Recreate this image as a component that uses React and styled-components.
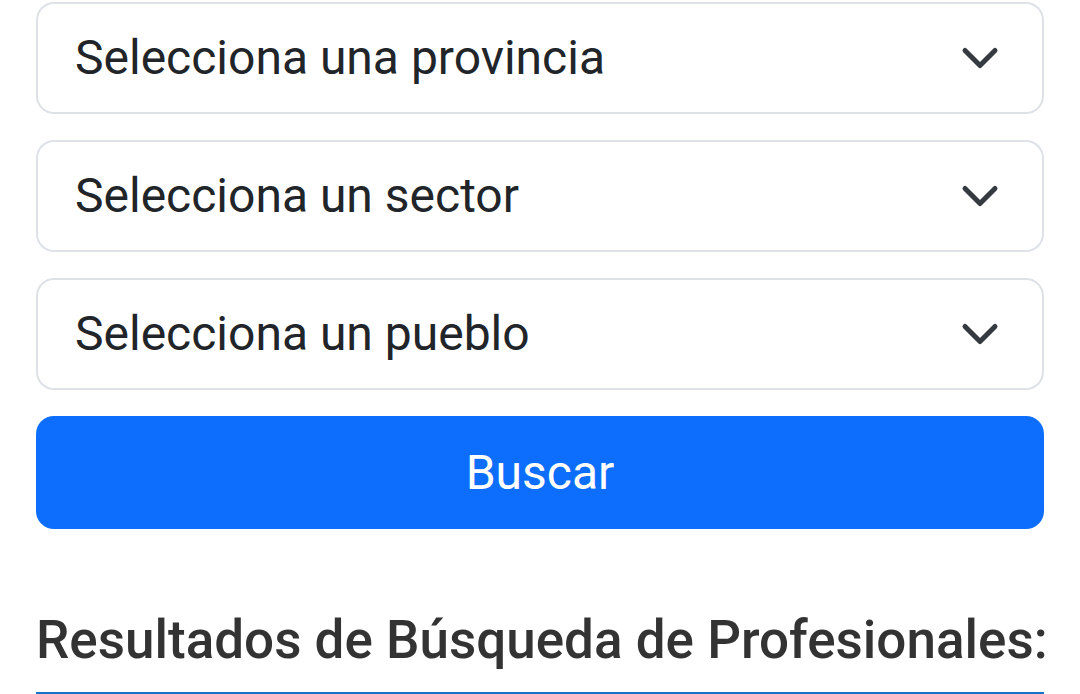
import React from 'react'
import styled, { createGlobalStyle } from 'styled-components'

const GlobalStyle = createGlobalStyle`
  html, body {
    margin: 0;
    padding: 0;
    background: #ffffff;
  }
  body {
    font-family: Roboto, "Noto Sans", "Liberation Sans", sans-serif;
    color: #212529;
  }
`

const Page = styled.div`
  padding: 2px 36px 0;
  display: flex;
  flex-direction: column;
`

const SearchForm = styled.form`
  display: flex;
  flex-direction: column;
  gap: 26px;
  margin: 0;
`

const SelectWrap = styled.div`
  position: relative;
  height: 112px;
`

const Select = styled.select`
  appearance: none;
  -webkit-appearance: none;
  width: 100%;
  height: 100%;
  box-sizing: border-box;
  padding: 0 96px 0 37px;
  border: 2px solid #dee2e6;
  border-radius: 18px;
  background: #fff;
  font-family: Roboto, "Noto Sans", sans-serif;
  font-size: 48px;
  line-height: 1.5;
  color: #212529;
  outline: none;
`

const Chevron = styled.svg`
  position: absolute;
  right: 44px;
  top: 50%;
  width: 40px;
  height: 40px;
  transform: translateY(-50%);
  pointer-events: none;
`

const SubmitButton = styled.button`
  height: 113px;
  border: none;
  border-radius: 18px;
  background: #0d6efd;
  color: #fff;
  font-family: Roboto, "Noto Sans", sans-serif;
  font-size: 48px;
  cursor: pointer;
`

const ResultsTitle = styled.h5`
  margin: 80px 0 0;
  font-size: 53px;
  font-weight: 500;
  line-height: 1.2;
  color: #333333;
  white-space: nowrap;
`

const ResultsList = styled.div`
  margin-top: 19px;
  border-top: 3px solid #1c72c8;
`

const options = [
  'Selecciona una provincia',
  'Selecciona un sector',
  'Selecciona un pueblo',
]

const Dropdown = ({ placeholder }) => (
  <SelectWrap>
    <Select defaultValue="">
      <option value="">{placeholder}</option>
    </Select>
    <Chevron viewBox="0 0 16 16" fill="none">
      <path
        d="m2 5 6 6 6-6"
        stroke="#343a40"
        strokeWidth="2"
        strokeLinecap="round"
        strokeLinejoin="round"
      />
    </Chevron>
  </SelectWrap>
)

export default function App() {
  return (
    <Page>
      <GlobalStyle />
      <SearchForm onSubmit={(e) => e.preventDefault()}>
        {options.map((o) => (
          <Dropdown key={o} placeholder={o} />
        ))}
        <SubmitButton type="submit">Buscar</SubmitButton>
      </SearchForm>
      <ResultsTitle>Resultados de Búsqueda de Profesionales:</ResultsTitle>
      <ResultsList />
    </Page>
  )
}
